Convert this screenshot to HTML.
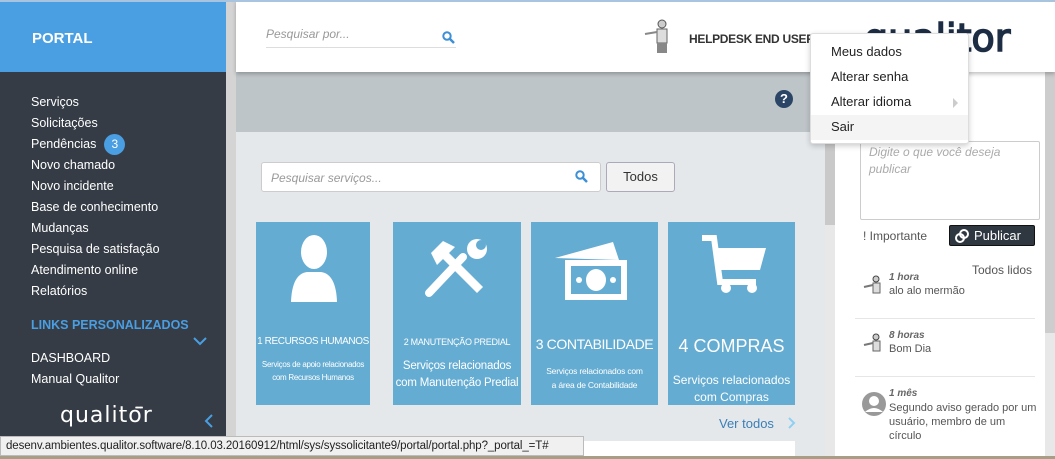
<!DOCTYPE html>
<html><head><meta charset="utf-8"><style>
*{margin:0;padding:0;box-sizing:border-box}
body{width:1055px;height:459px;overflow:hidden;position:relative;font-family:"Liberation Sans",sans-serif;background:#e4e8eb}
.a{position:absolute}
#side{left:0;top:0;width:226px;height:459px;background:#353c45}
#side .hd{height:72px;background:#4a9ee2;color:#fff;font-weight:bold;font-size:15px;padding:30px 0 0 32px}
.nav{position:absolute;left:31px;color:#fff;font-size:12.5px}
.nav div{height:21px;line-height:21px}
.badge{display:inline-block;width:21px;height:21px;border-radius:50%;background:#4a9ee2;text-align:center;margin-left:8px;font-size:12px}
.tile{position:absolute;top:222px;height:183px;background:#65acd2;color:#fff;text-align:center}
.tile .t{position:absolute;left:0;right:0;white-space:nowrap}
</style></head><body>
<div class="a" style="left:0;top:0;width:1055px;height:2px;background:#a9c4df;z-index:5"></div>
<div id="side" class="a">
<div class="hd">PORTAL</div>
<div class="nav" style="top:92px">
<div>Serviços</div><div>Solicitações</div><div>Pendências<span class="badge">3</span></div><div>Novo chamado</div><div>Novo incidente</div><div>Base de conhecimento</div><div>Mudanças</div><div>Pesquisa de satisfação</div><div>Atendimento online</div><div>Relatórios</div>
</div>
<div class="a" style="left:31px;top:318px;color:#4a9ee2;font-weight:bold;font-size:12.5px">LINKS PERSONALIZADOS</div>
<svg class="a" style="left:193px;top:336px" width="14" height="10"><path d="M1 2l6 6 6-6" stroke="#4a9ee2" stroke-width="2" fill="none"/></svg>
<div class="nav" style="top:348px"><div>DASHBOARD</div><div>Manual Qualitor</div></div>
<div class="a" style="left:60px;top:405px;color:#fff;font-size:22px;font-family:'DejaVu Sans',sans-serif;line-height:22px;letter-spacing:1px">qualitor</div>
<div class="a" style="left:135px;top:405px;color:#fff;font-size:7px;letter-spacing:-1px">•••••</div>
<svg class="a" style="left:204px;top:414px" width="10" height="14"><path d="M8 1L2 7l6 6" stroke="#4a9ee2" stroke-width="2" fill="none"/></svg>
</div>
<div class="a" style="left:226px;top:0;width:10px;height:459px;background:#d4d4d4"></div>
<!-- header -->
<div class="a" style="left:236px;top:0;width:819px;height:72px;background:#fff;box-shadow:0 2px 4px rgba(0,0,0,.25);z-index:2">
<div class="a" style="left:30px;top:27px;font-size:12px;font-style:italic;color:#999">Pesquisar por...</div>
<div class="a" style="left:30px;top:47px;width:190px;height:1px;background:#ddd"></div>
<svg class="a" style="left:206px;top:31px" width="13" height="13"><circle cx="5" cy="5" r="3.7" stroke="#3d8fd6" stroke-width="2" fill="none"/><path d="M8 8l4 4" stroke="#3d8fd6" stroke-width="2.5"/></svg>
<svg class="a" style="left:406px;top:19px" width="34" height="36"><circle cx="20" cy="5" r="4" fill="#ccc" stroke="#555"/><rect x="15" y="10" width="10" height="14" fill="#ddd" stroke="#666"/><path d="M15 13L3 15" stroke="#888" stroke-width="2"/><rect x="15" y="24" width="10" height="10" fill="#888"/></svg>
<div class="a" style="left:453px;top:32px;font-size:12px;font-weight:bold;color:#333;letter-spacing:-.3px">HELPDESK END USER</div>
<div class="a" style="left:628px;top:18px;font-size:38px;color:#1d2d44;font-family:'DejaVu Sans',sans-serif;line-height:40px;letter-spacing:0px;-webkit-text-stroke:1.5px #1d2d44">qualitor</div>
</div>
<!-- gray band -->
<div class="a" style="left:236px;top:72px;width:589px;height:60px;background:#bec5c8"></div>
<div class="a" style="left:775px;top:90px;width:18px;height:18px;border-radius:50%;background:#2a4566;color:#fff;font-weight:bold;font-size:13px;text-align:center;line-height:18px">?</div>
<!-- search services -->
<div class="a" style="left:261px;top:162px;width:340px;height:30px;background:#fff;border:1px solid #ccc;border-radius:3px"></div>
<div class="a" style="left:271px;top:171px;font-size:12px;font-style:italic;color:#999">Pesquisar serviços...</div>
<svg class="a" style="left:575px;top:170px" width="13" height="13"><circle cx="5" cy="5" r="3.7" stroke="#3d8fd6" stroke-width="2" fill="none"/><path d="M8 8l4 4" stroke="#3d8fd6" stroke-width="2.5"/></svg>
<div class="a" style="left:606px;top:162px;width:69px;height:30px;background:#f2f2f2;border:1px solid #aab;border-radius:3px;font-size:13px;color:#333;text-align:center;line-height:28px">Todos</div>
<!-- tiles -->
<div class="tile" style="left:256px;width:114px">
<svg class="a" style="left:33px;top:12px" width="50" height="70"><ellipse cx="25" cy="18" rx="13" ry="17" fill="#fff"/><path d="M2 68Q3 40 18 38h14Q47 40 48 68z" fill="#fff"/></svg>
<div class="t" style="top:114px;font-size:10px;letter-spacing:-.4px">1 RECURSOS HUMANOS</div>
<div class="t" style="top:136px;font-size:8px;line-height:13px;letter-spacing:-.3px">Serviços de apoio relacionados<br>com Recursos Humanos</div></div>
<div class="tile" style="left:393px;width:128px">
<svg class="a" style="left:30px;top:13px" width="64" height="64"><path d="M6 58L40 22" stroke="#fff" stroke-width="8" stroke-linecap="round"/><path d="M8 18L20 6l12 6-6 6 34 34-6 6-34-34-6 6z" fill="#fff"/><circle cx="54" cy="14" r="10" fill="#fff"/><circle cx="58" cy="10" r="5" fill="#65acd2"/></svg>
<div class="t" style="top:115px;font-size:9px;letter-spacing:-.3px">2 MANUTENÇÃO PREDIAL</div>
<div class="t" style="top:136px;font-size:11.5px;line-height:17px;letter-spacing:-.2px">Serviços relacionados<br>com Manutenção Predial</div></div>
<div class="tile" style="left:531px;width:127px">
<svg class="a" style="left:20px;top:14px" width="90" height="70"><path d="M4 22L62 6l6 18z" fill="#fff"/><rect x="14" y="24" width="62" height="40" fill="#fff"/><rect x="20" y="30" width="50" height="28" fill="#65acd2"/><ellipse cx="45" cy="44" rx="10" ry="11" fill="#fff"/><circle cx="28" cy="44" r="3" fill="#fff"/><circle cx="62" cy="44" r="3" fill="#fff"/></svg>
<div class="t" style="top:114px;font-size:14px;letter-spacing:-.4px">3 CONTABILIDADE</div>
<div class="t" style="top:142px;font-size:8.5px;line-height:14px;letter-spacing:-.2px">Serviços relacionados com<br>a área de Contabilidade</div></div>
<div class="tile" style="left:668px;width:127px">
<svg class="a" style="left:32px;top:12px" width="70" height="60"><path d="M2 4h12l6 44h36" stroke="#fff" stroke-width="6" fill="none"/><path d="M16 14h50l-6 22H20z" fill="#fff"/><circle cx="26" cy="54" r="5" fill="#fff"/><circle cx="52" cy="54" r="5" fill="#fff"/></svg>
<div class="t" style="top:114px;font-size:18px">4 COMPRAS</div>
<div class="t" style="top:150px;font-size:12px;line-height:17px">Serviços relacionados<br>com Compras</div></div>
<div class="a" style="left:719px;top:416px;font-size:13px;color:#3a7fb8">Ver todos</div>
<svg class="a" style="left:788px;top:417px" width="8" height="12"><path d="M1 1l5 5-5 5" stroke="#8fd0f2" stroke-width="2" fill="none"/></svg>
<div class="a" style="left:256px;top:441px;width:539px;height:18px;background:#fff"></div>
<!-- main scrollbar -->
<div class="a" style="left:825px;top:72px;width:10px;height:387px;background:#e8e8e8"></div>
<div class="a" style="left:825px;top:72px;width:10px;height:153px;background:#c9c9c9"></div>
<!-- right panel -->
<div class="a" style="left:835px;top:72px;width:210px;height:387px;background:#fff"></div>
<div class="a" style="left:1045px;top:72px;width:10px;height:387px;background:#e8e8e8"></div>
<div class="a" style="left:1045px;top:72px;width:10px;height:261px;background:#cdcdcd"></div>
<div class="a" style="left:860px;top:141px;width:180px;height:79px;border:1px solid #ccc;border-radius:2px"></div>
<div class="a" style="left:869px;top:144px;font-size:12px;font-style:italic;color:#aaa;line-height:17px">Digite o que você deseja<br>publicar</div>
<div class="a" style="left:863px;top:229px;font-size:12px;color:#555">! Importante</div>
<div class="a" style="left:949px;top:225px;width:86px;height:21px;background:#2f3740;border:1px solid #111;border-radius:2px;color:#fff;font-size:13px;line-height:19px;padding-left:24px">Publicar</div>
<svg class="a" style="left:954px;top:228px" width="16" height="16"><circle cx="6" cy="10" r="4" stroke="#fff" stroke-width="2" fill="none"/><circle cx="10" cy="6" r="4" stroke="#fff" stroke-width="2" fill="none"/></svg>
<div class="a" style="left:972px;top:263px;font-size:12px;color:#555">Todos lidos</div>
<div class="a" style="left:889px;top:272px;font-size:10px;font-weight:bold;font-style:italic;color:#666">1 hora</div>
<div class="a" style="left:889px;top:285px;font-size:11px;color:#555">alo alo mermão</div>
<div class="a" style="left:855px;top:318px;width:180px;height:1px;background:#e6e6e6"></div>
<div class="a" style="left:889px;top:330px;font-size:10px;font-weight:bold;font-style:italic;color:#666">8 horas</div>
<div class="a" style="left:889px;top:343px;font-size:11px;color:#555">Bom Dia</div>
<div class="a" style="left:855px;top:376px;width:180px;height:1px;background:#e6e6e6"></div>
<div class="a" style="left:889px;top:388px;font-size:10px;font-weight:bold;font-style:italic;color:#666">1 mês</div>
<div class="a" style="left:889px;top:401px;font-size:11px;color:#555;line-height:14px">Segundo aviso gerado por um<br>usuário, membro de um<br>círculo</div>
<svg class="a" style="left:862px;top:275px" width="24" height="24"><circle cx="14" cy="4" r="3" fill="#ccc" stroke="#444"/><rect x="11" y="8" width="7" height="10" fill="#ddd" stroke="#666"/><path d="M11 10L2 12" stroke="#777" stroke-width="2"/></svg>
<svg class="a" style="left:862px;top:333px" width="24" height="24"><circle cx="14" cy="4" r="3" fill="#ccc" stroke="#444"/><rect x="11" y="8" width="7" height="10" fill="#ddd" stroke="#666"/><path d="M11 10L2 12" stroke="#777" stroke-width="2"/></svg>
<svg class="a" style="left:862px;top:392px" width="24" height="24"><circle cx="12" cy="12" r="12" fill="#999"/><circle cx="12" cy="9" r="5" fill="#fff"/><path d="M3 20Q12 12 21 20" fill="#fff"/></svg>
<!-- dropdown -->
<div class="a" style="left:810px;top:33px;width:159px;height:111px;background:#fff;border:1px solid #ddd;border-radius:3px;box-shadow:0 2px 6px rgba(0,0,0,.2);z-index:6;font-size:13px;color:#222">
<div style="position:absolute;left:20px;top:10px">Meus dados</div>
<div style="position:absolute;left:20px;top:35px">Alterar senha</div>
<div style="position:absolute;left:20px;top:60px">Alterar idioma</div>
<div style="position:absolute;right:10px;top:64px;width:0;height:0;border-left:5px solid #ccc;border-top:5px solid transparent;border-bottom:5px solid transparent"></div>
<div style="position:absolute;left:0;right:0;top:81px;height:25px;background:#f4f4f4"></div>
<div style="position:absolute;left:20px;top:85px">Sair</div>
</div>
<!-- status bar -->
<div class="a" style="left:0;top:436px;width:584px;height:20px;background:#f0f0f0;border:1px solid #bbb;font-size:11.5px;color:#222;padding:3px 0 0 5px;z-index:7;white-space:nowrap;overflow:hidden;letter-spacing:-.1px">desenv.ambientes.qualitor.software/8.10.03.20160912/html/sys/syssolicitante9/portal/portal.php?_portal_=T#</div>
<div class="a" style="left:0;top:456px;width:1055px;height:3px;background:#a89e86;z-index:7"></div>
</body></html>
